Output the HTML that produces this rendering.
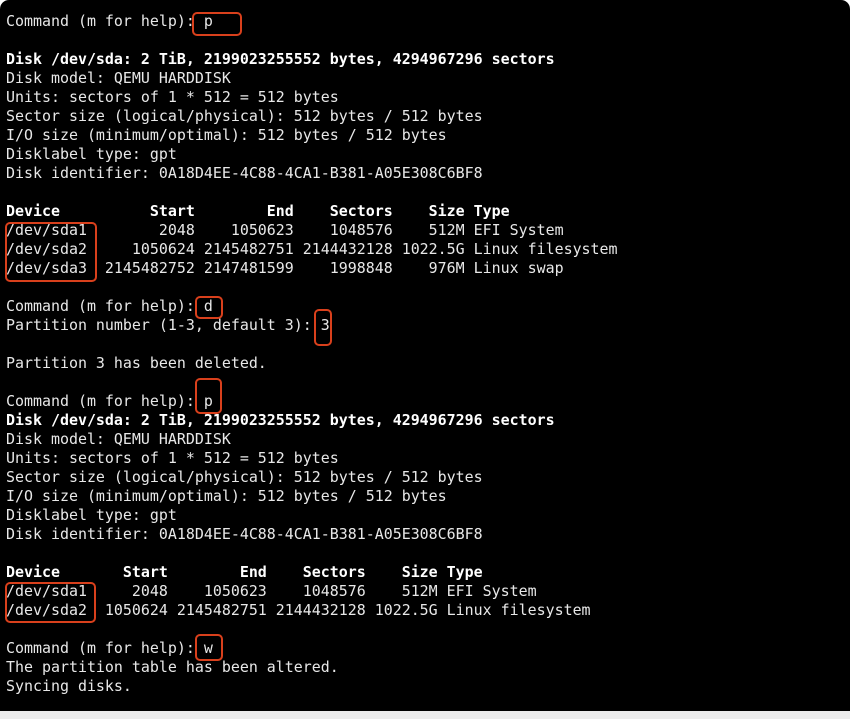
<!DOCTYPE html>
<html><head><style>
html,body{margin:0;padding:0;width:850px;height:719px;background:#fff;overflow:hidden}
.t{position:absolute;left:0;top:0;width:850px;height:711px;background:#000;border-radius:9px 9px 0 0}
.g{position:absolute;left:0;top:711px;width:850px;height:8px;background:#ececec}
pre{position:absolute;left:6px;top:12px;margin:0;font-family:"DejaVu Sans Mono","Liberation Mono",monospace;font-size:14.95px;line-height:19px;color:#e8e8e8}
b{color:#fff}
.r{position:absolute;border:2px solid #d9401c;border-radius:5px;box-sizing:border-box}
</style></head><body>
<div class="t"></div><div class="g"></div>
<pre>Command (m for help): p

<b>Disk /dev/sda: 2 TiB, 2199023255552 bytes, 4294967296 sectors</b>
Disk model: QEMU HARDDISK
Units: sectors of 1 * 512 = 512 bytes
Sector size (logical/physical): 512 bytes / 512 bytes
I/O size (minimum/optimal): 512 bytes / 512 bytes
Disklabel type: gpt
Disk identifier: 0A18D4EE-4C88-4CA1-B381-A05E308C6BF8

<b>Device          Start        End    Sectors    Size Type</b>
/dev/sda1        2048    1050623    1048576    512M EFI System
/dev/sda2     1050624 2145482751 2144432128 1022.5G Linux filesystem
/dev/sda3  2145482752 2147481599    1998848    976M Linux swap

Command (m for help): d
Partition number (1-3, default 3): 3

Partition 3 has been deleted.

Command (m for help): p
<b>Disk /dev/sda: 2 TiB, 2199023255552 bytes, 4294967296 sectors</b>
Disk model: QEMU HARDDISK
Units: sectors of 1 * 512 = 512 bytes
Sector size (logical/physical): 512 bytes / 512 bytes
I/O size (minimum/optimal): 512 bytes / 512 bytes
Disklabel type: gpt
Disk identifier: 0A18D4EE-4C88-4CA1-B381-A05E308C6BF8

<b>Device       Start        End    Sectors    Size Type</b>
/dev/sda1     2048    1050623    1048576    512M EFI System
/dev/sda2  1050624 2145482751 2144432128 1022.5G Linux filesystem

Command (m for help): w
The partition table has been altered.
Syncing disks.</pre>
<div class="r" style="left:192px;top:12px;width:50px;height:24px"></div>
<div class="r" style="left:5px;top:222px;width:92px;height:60px"></div>
<div class="r" style="left:195px;top:296px;width:28px;height:23px"></div>
<div class="r" style="left:314px;top:309px;width:18px;height:37px"></div>
<div class="r" style="left:195px;top:378px;width:27px;height:36px"></div>
<div class="r" style="left:5px;top:582px;width:91px;height:41px"></div>
<div class="r" style="left:195px;top:634px;width:28px;height:27px"></div>
</body></html>
